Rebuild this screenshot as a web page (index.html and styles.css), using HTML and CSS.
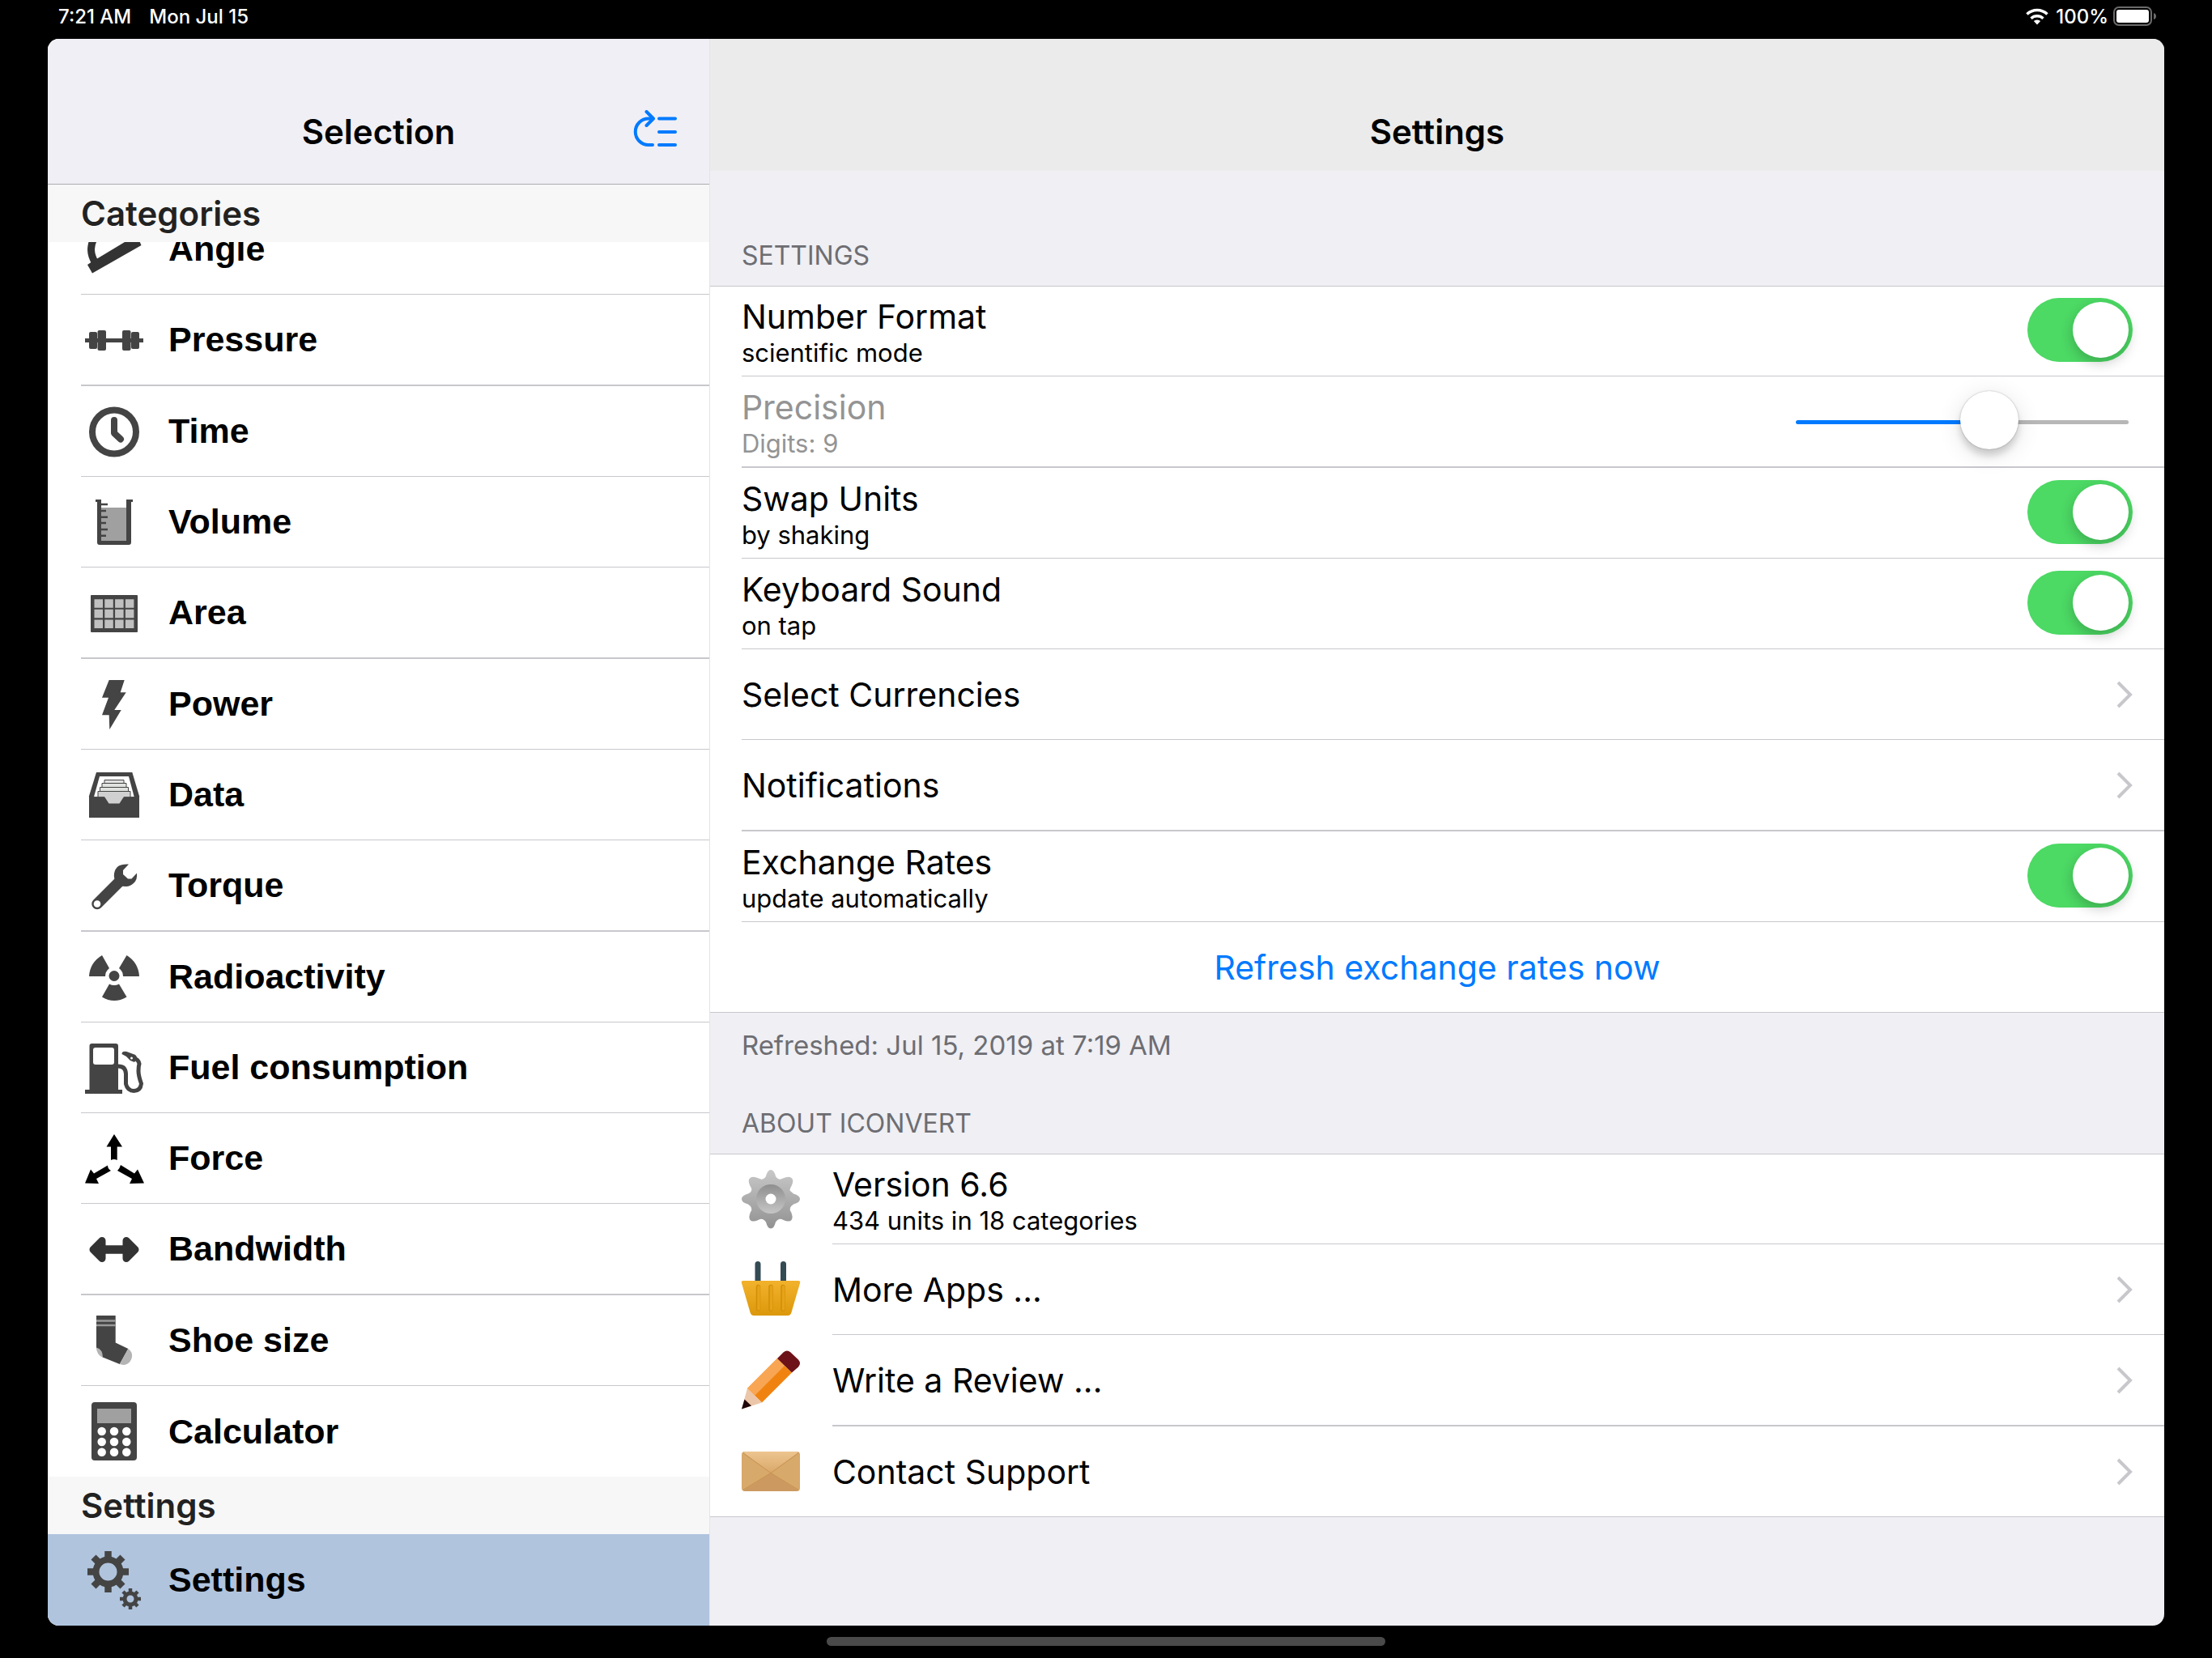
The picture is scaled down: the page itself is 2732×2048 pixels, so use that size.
FILE: index.html
```html
<!DOCTYPE html>
<html lang="en">
  <head>
    <meta charset="UTF-8" />
    <meta name="viewport" content="width=device-width, initial-scale=1.0" />
    <title>iConvert - Settings</title>
    <link rel="stylesheet" href="styles.css">
  </head>
  <body>
    <div class="statusbar">
      <span>7:21 AM</span>
      <span>Mon Jul 15</span>
      <span class="status-right">
        <svg class="wifi" viewBox="0 0 28 21">
          <path d="M1.5 7.5a18 18 0 0 1 25 0" fill="none" stroke="#fff" stroke-width="3.6" />
          <path d="M6.5 12.7a11 11 0 0 1 15 0" fill="none" stroke="#fff" stroke-width="3.4" />
          <path d="M14 20.5l-4.2-4.4a6 6 0 0 1 8.4 0z" fill="#fff" />
        </svg>
        <span>100%</span>
        <svg class="battery" viewBox="0 0 53 24">
          <rect x="1" y="1" width="46" height="22" rx="6" fill="none" stroke="#6b6b6b" stroke-width="2" />
          <rect x="4" y="4" width="40" height="16" rx="3" fill="#fff" />
          <path d="M50 8q3 1 3 4t-3 4z" fill="#6b6b6b" />
        </svg>
      </span>
    </div>
    <div class="app">
      <nav class="sidebar">
        <header class="side-head">
          <h1>Selection</h1>
          <button class="reorder" aria-label="Reorder">
            <svg viewBox="0 0 54 46">
              <g fill="none" stroke="#007aff" stroke-width="4" stroke-linecap="round" stroke-linejoin="round">
                <path d="M24 10.500h-5a16.200 16.200 0 0 0 0 32.500h5" />
                <path d="M16.500 2l8.500 8.500-8.500 8.500" />
                <path d="M32 10.500h20M32 27h20M32 43h20" />
              </g>
            </svg>
          </button>
        </header>
        <h2 class="side-title">Categories</h2>
        <ul class="cats">
          <li>
            <a href="#angle">
              <svg class="icon" viewBox="0 0 72 72" fill="#333">
                <path d="M3 55l4.500-3L49 27l15-9 5.500 13L9 65.500z" />
                <path d="M13 53q-7-11-5-21 1-9 10-18" fill="none" stroke="#333" stroke-width="9" />
              </svg>
              Angle
            </a>
          </li>
          <li>
            <a href="#pressure">
              <svg class="icon" viewBox="0 0 72 72" fill="#444">
                <rect y="34" width="72" height="5" />
                <rect x="5" y="26" width="10" height="21" rx="2" />
                <rect x="15.500" y="24" width="10.500" height="25" rx="2" />
                <rect x="46" y="24" width="10.500" height="25" rx="2" />
                <rect x="57" y="26" width="10" height="21" rx="2" />
              </svg>
              Pressure
            </a>
          </li>
          <li>
            <a href="#time">
              <svg class="icon" viewBox="0 0 72 72" fill="none" stroke="#444">
                <circle cx="36" cy="36.500" r="27" stroke-width="8" />
                <path d="M36 22v16l8 7.500" stroke-width="8" stroke-linecap="round" stroke-linejoin="round" />
              </svg>
              Time
            </a>
          </li>
          <li>
            <a href="#volume">
              <svg class="icon" viewBox="0 0 72 72" fill="#444">
                <rect x="19" y="18" width="33" height="42" fill="#a0a0a0" />
                <path d="M13 8h7v51h31V8h8v3h-2v50q0 3-3 3H18q-3 0-3-3V11h-2z" />
                <path d="M20 14h8M20 22h6M20 29.700h8M20 37h6M20 45h8M20 52.700h6" stroke="#444" stroke-width="2.500" />
              </svg>
              Volume
            </a>
          </li>
          <li>
            <a href="#area">
              <svg class="icon" viewBox="0 0 72 72">
                <rect x="7" y="14" width="58" height="46" rx="1" fill="#444" />
                <path d="M11.500 24.500h49M11.500 37h49M11.500 49.700h49" stroke="#c0c0c0" stroke-width="10.500" stroke-dasharray="10.500 2.300" />
              </svg>
              Area
            </a>
          </li>
          <li>
            <a href="#power">
              <svg class="icon" viewBox="0 0 72 72" fill="#444">
                <path d="M29.700 6h19l-5 15.300h7L36.300 43h8.400L30.300 67l-.6-17.700H21l8-21.600h-8z" />
              </svg>
              Power
            </a>
          </li>
          <li>
            <a href="#data">
              <svg class="icon" viewBox="0 0 72 72">
                <path d="M14 8h44.300L67 37.300V64H5V37.300z" fill="#444" />
                <path d="M18 13h36l6.700 25.300H11z" fill="#fff" />
                <g fill="#dfe2df" stroke="#444" stroke-width="1">
                  <path d="M24 21v-3.500h24V21M21 26v-4.500h30V26M18.500 31v-4.500h35V31" />
                  <path d="M16 39v-7.500h40V39z" fill="#d0d0d0" />
                </g>
                <path d="M11 38.300h13l5.500 8h13l5.500-8h13V48H11z" fill="#444" />
                <path d="M24 38h24l-5.500 8.500h-13z" fill="#d0d0d0" />
              </svg>
              Data
            </a>
          </li>
          <li>
            <a href="#torque">
              <svg class="icon" viewBox="0 0 72 72">
                <path d="M15 58.500l27-27" stroke="#444" stroke-width="13.500" stroke-linecap="round" />
                <circle cx="15" cy="58.500" r="4.300" fill="#fff" />
                <path d="M54 9.500L47 17v5l6 5.500h4.500l6.500-7q1 8-4 12.500T50 37q-7 0-11-5t-3-11q1-6 5-9t13-2.500z" fill="#444" />
              </svg>
              Torque
            </a>
          </li>
          <li>
            <a href="#radioactivity">
              <svg class="icon" viewBox="0 0 72 72" fill="#444">
                <circle cx="36" cy="34.500" r="6.500" />
                <path d="M5 35q1-17 16-26l9 16q-5 4-5 10zM67 35q-1-17-15.500-26l-9.500 16q5 4 5 10zM30 44.500q6 3 12 0l9.500 16q-15.500 9-30.500 0z" />
              </svg>
              Radioactivity
            </a>
          </li>
          <li>
            <a href="#fuel">
              <svg class="icon" viewBox="0 0 72 72" fill="#444">
                <path d="M5.500 9q0-3 3-3H38q3 0 3 3v54h5v5H0v-5h5.500z" />
                <rect x="10" y="11" width="26" height="21" rx="3" fill="#fff" />
                <path d="M41 34q9 0 9.500 9v13q2 8.500 10 8.500t9-9Q66 46 66 40t1-9q-1-6-8-7" fill="none" stroke="#444" stroke-width="5" />
                <path d="M45.500 19q0-4 6-3l8 3q5 1 4.500 6l-3 4-5-2-5-5z" />
                <circle cx="57.500" cy="24" r="1.500" fill="#fff" />
              </svg>
              Fuel consumption
            </a>
          </li>
          <li>
            <a href="#force">
              <svg class="icon" viewBox="0 0 72 72">
                <path d="M36 6l10 15.500h-6.300V38q-4-2-7.700 0V21.500h-5.500z" />
                <path d="M0 66.500l7-17 4 5L28 44.500q0 4 4 6.500L14 61l3 6z" />
                <path d="M73 66.500l-8-17-4 5-17-10.500q-1 4-4 7l18 10-3 6z" />
              </svg>
              Force
            </a>
          </li>
          <li>
            <a href="#bandwidth">
              <svg class="icon" viewBox="0 0 72 72" fill="#333" stroke="#333" stroke-width="9" stroke-linejoin="round">
                <path d="M10 36.500l11-11v22zM62 36.500l-11-11v22z" />
                <path d="M20 36.500h32" stroke-width="10.500" />
              </svg>
              Bandwidth
            </a>
          </li>
          <li>
            <a href="#shoe">
              <svg class="icon" viewBox="0 0 72 72">
                <path d="M14 5h23.700v33.500l15.600 7.500-10.500 19-21-8.500L14 45z" fill="#444" />
                <path d="M14 11.500h23.700M14 17h23.700" stroke="#999" stroke-width="2.500" />
                <path d="M53.300 46q6 4 4.500 11t-9 9q-3 0-6-1z" fill="#b4b4b4" />
                <path d="M14 44.500q8 2 8 12.500-8-4-8-12.500z" fill="#b4b4b4" />
              </svg>
              Shoe size
            </a>
          </li>
          <li>
            <a href="#calculator">
              <svg class="icon" viewBox="0 0 72 72">
                <rect x="8" width="56" height="72" rx="4" fill="#444" />
                <rect x="15" y="8" width="42" height="18" fill="#a0a0a0" />
                <g stroke="#fff" stroke-width="10.500" stroke-linecap="round">
                  <path d="M20.700 36h0M36 36h0M51.300 36h0M20.700 49h0M36 49h0M51.300 49h0M20.700 61.700h0M36 61.700h0M51.300 61.700h0" />
                </g>
              </svg>
              Calculator
            </a>
          </li>
        </ul>
        <h2 class="side-title">Settings</h2>
        <ul>
          <li class="selected">
            <a href="#settings">
              <svg class="icon" viewBox="0 0 72 72" fill="none" stroke="#444">
                <circle cx="28.500" cy="25.500" r="15" stroke-width="8" />
                <path d="M28.500 0v9M28.500 42v9M3 25.500h9M45 25.500h9M10.500 7.500l6 6M40.500 37.500l6 6M10.500 43.500l6-6M40.500 13.500l6-6" stroke-width="8.500" />
                <circle cx="56" cy="59" r="7" stroke-width="5" />
                <path d="M56 46v5M56 67v5M43 59h5M64 59h5M47 50l3 3M62 65l3 3M47 68l3-3M62 53l3-3" stroke-width="4.500" />
              </svg>
              Settings
            </a>
          </li>
        </ul>
      </nav>
      <main class="detail">
        <header class="detail-head">
          <h1>Settings</h1>
        </header>
        <h2 class="group-title">SETTINGS</h2>
        <ul class="group">
          <li>
            <label class="text two" for="format">Number Format<small>scientific mode</small></label>
            <input type="checkbox" class="switch" id="format" checked />
          </li>
          <li>
            <label class="text two off" for="digits">Precision<small>Digits: 9</small></label>
            <input type="range" class="slider" id="digits" min="0" max="15" value="9" />
          </li>
          <li>
            <label class="text two" for="swap">Swap Units<small>by shaking</small></label>
            <input type="checkbox" class="switch" id="swap" checked />
          </li>
          <li>
            <label class="text two" for="sound">Keyboard Sound<small>on tap</small></label>
            <input type="checkbox" class="switch" id="sound" checked />
          </li>
          <li>
            <a class="text" href="#currencies">Select Currencies</a>
            <svg class="chevron" viewBox="0 0 20 34"><path d="M2 2l15 15L2 32" /></svg>
          </li>
          <li>
            <a class="text" href="#notifications">Notifications</a>
            <svg class="chevron" viewBox="0 0 20 34"><path d="M2 2l15 15L2 32" /></svg>
          </li>
          <li>
            <label class="text two" for="rates">Exchange Rates<small>update automatically</small></label>
            <input type="checkbox" class="switch" id="rates" checked />
          </li>
          <li>
            <button class="refresh">Refresh exchange rates now</button>
          </li>
        </ul>
        <p class="note">Refreshed: Jul 15, 2019 at 7:19 AM</p>
        <h2 class="group-title about-title">ABOUT ICONVERT</h2>
        <ul class="group about">
          <li>
            <svg class="icon" viewBox="0 0 72 72">
              <defs>
                <linearGradient id="steel" gradientUnits="userSpaceOnUse" x1="0" y1="0" x2="0" y2="72">
                  <stop offset="0" stop-color="#c8c8c8" />
                  <stop offset="1" stop-color="#929292" />
                </linearGradient>
                <linearGradient id="hub" x1="0" y1="0" x2="0" y2="1">
                  <stop offset="0" stop-color="#8e8e8e" />
                  <stop offset="1" stop-color="#c6c6c6" />
                </linearGradient>
              </defs>
              <path d="M36 0q4 0 6 8 1.500 3 4 3.500t5-1q7-3 10.500-.5t0 10q-3 5-1.500 6t4 3.500q8 2 8 6.500t-8 6.500q-3 2-4 4.500t1 5q3 7 .5 10t-10 0q-3-2-5.500-1t-4 3.500q-2 8-6 8t-6-8q-1.500-2.500-4-3.500t-5.500 1q-7.500 3-10 0t.5-10q2-2.500 1-5T8 42.500Q0 40.500 0 36t8-6.500q3-1 4-3.500t-1.500-6q-3.500-7.500 0-10t10.500.5q2.500 1.500 5 1t4-3.500q2-8 6-8z" fill="url(#steel)" />
              <circle cx="36" cy="36" r="18" fill="url(#hub)" />
              <circle cx="36" cy="36" r="6.500" fill="#fff" />
            </svg>
            <div class="text two">Version 6.6<small>434 units in 18 categories</small></div>
          </li>
          <li>
            <svg class="icon" viewBox="0 0 72 72">
              <defs>
                <linearGradient id="basket" x1="0" y1="0" x2="0" y2="1">
                  <stop offset="0" stop-color="#f2b22c" />
                  <stop offset="1" stop-color="#dc980b" />
                </linearGradient>
              </defs>
              <path d="M20 4.500V28M51.500 4.500V28" stroke="#344b54" stroke-width="7" stroke-linecap="round" />
              <path d="M2 25h68q3 0 2 3L61.500 64q-1 4-4.500 4H15q-3.500 0-4.500-4L0 28q-1-3 2-3z" fill="url(#basket)" />
              <path d="M20.500 32.500V60M36 32.500V60M51 32.500V60" stroke="#d08e0a" stroke-width="5.500" stroke-linecap="round" />
              <path d="M21 32.500V60M36.500 32.500V60M51.500 32.500V60" stroke="#e6a318" stroke-width="3.500" stroke-linecap="round" />
            </svg>
            <a class="text" href="#apps">More Apps ...</a>
            <svg class="chevron" viewBox="0 0 20 34"><path d="M2 2l15 15L2 32" /></svg>
          </li>
          <li>
            <svg class="icon" viewBox="0 0 72 72">
              <path d="M44 9l18 17.500-37 37L7 46z" fill="#f08310" />
              <path d="M44 9l9 9-37 37-9-9z" fill="#f8a653" />
              <path d="M44 9l7.500-7.500q4.500-4 9 0l9.500 9q4 4.500 0 9L62 26.500z" fill="#6d1218" />
              <path d="M7 46l18 17.500L0 71.500z" fill="#ebc6a8" />
              <path d="M3.500 59.500l8.500 8-12 4z" fill="#1f0608" />
            </svg>
            <a class="text" href="#review">Write a Review ...</a>
            <svg class="chevron" viewBox="0 0 20 34"><path d="M2 2l15 15L2 32" /></svg>
          </li>
          <li>
            <svg class="icon" viewBox="0 0 72 72">
              <defs>
                <linearGradient id="flap" x1="0" y1="0" x2="0" y2="1">
                  <stop offset="0" stop-color="#edc590" />
                  <stop offset="1" stop-color="#d9a86a" />
                </linearGradient>
              </defs>
              <rect y="11" width="72" height="49" rx="4" fill="#d7a96b" />
              <path d="M2 12q1-1 3-1h62q2 0 3 1L36 37.500z" fill="url(#flap)" />
              <path d="M2 59q1 1 3 1h62q2 0 3-1L36 37.500z" fill="#cc9961" />
              <path d="M1.500 12.500L36 37.500l34.500-25M1.500 58.500L36 37.500l34.500 21" fill="none" stroke="#c8924f" stroke-width="1" />
            </svg>
            <a class="text" href="#support">Contact Support</a>
            <svg class="chevron" viewBox="0 0 20 34"><path d="M2 2l15 15L2 32" /></svg>
          </li>
        </ul>
      </main>
    </div>
    <div class="home"></div>
  </body>
</html>
```

FILE: styles.css
```css
* {
  box-sizing: border-box;
}
body {
  display: flex;
  flex-direction: column;
  min-height: 100vh;
  margin: 0;
  color: #000;
  background-color: #000;
  font-family: Inter, "Liberation Sans", sans-serif;
  font-size: 41px;
}
h1,
h2,
p,
ul {
  margin: 0;
  padding: 0;
}
ul {
  list-style: none;
}
a {
  color: inherit;
  text-decoration: none;
}
button {
  padding: 0;
  border: 0;
  background: none;
  font: inherit;
  cursor: pointer;
}

/* status bar */
.statusbar {
  display: flex;
  align-items: center;
  gap: 22px;
  height: 48px;
  padding: 0 69px 8px 72px;
  color: #fff;
  font-size: 24px;
  font-weight: 500;
}
.status-right {
  display: flex;
  align-items: center;
  gap: 6px;
  margin-left: auto;
}
.wifi {
  width: 28px;
  height: 21px;
  margin-right: 3px;
}
.battery {
  width: 53px;
  height: 24px;
}

.app {
  display: flex;
  flex: 1;
  margin: 0 59px;
  border-radius: 14px;
  overflow: hidden;
  background-color: #efeff4;
}

/* sidebar */
.sidebar {
  width: 31.25%;
  background-color: #fff;
}
.side-head {
  display: grid;
  grid-template-columns: 1fr auto 1fr;
  align-items: center;
  height: 180px;
  padding: 50px 40px 0;
  background-color: #f0eff5;
  border-bottom: 1px solid #acacb0;
}
h1 {
  font-size: 42px;
  font-weight: 600;
}
.side-head h1 {
  grid-column: 2;
}
.reorder {
  justify-self: end;
  padding-bottom: 8px;
}
.reorder svg {
  display: block;
  width: 54px;
  height: 46px;
}
.side-title {
  height: 71px;
  padding-left: 41px;
  color: #222;
  background-color: #f7f7f7;
  font-size: 42px;
  font-weight: 600;
  line-height: 71px;
}
/* the list is scrolled a little, so its first row is cut off */
.cats {
  overflow: hidden;
}
.cats li:first-child {
  margin-top: -47px;
}
.sidebar li {
  height: 112px;
  padding-left: 41px;
}
.sidebar a {
  display: flex;
  align-items: center;
  gap: 31px;
  height: 100%;
  padding-left: 5px;
  border-bottom: 1px solid #c8c7cc;
  font-family: "Liberation Sans", Arial, sans-serif;
  font-size: 43px;
  font-weight: bold;
}
.sidebar li:nth-child(2),
.sidebar li:nth-child(5),
.sidebar li:nth-child(8),
.sidebar li:nth-child(12) {
  height: 113px;
}
.sidebar li:nth-child(2) a,
.sidebar li:nth-child(5) a,
.sidebar li:nth-child(8) a,
.sidebar li:nth-child(12) a {
  border-bottom-width: 2px;
}
.sidebar li:last-child a {
  border-bottom: 0;
}
.sidebar .selected {
  height: 113px;
  background-color: #b0c4de;
}
.icon {
  flex: none;
  width: 72px;
  height: 72px;
  overflow: visible;
}

/* detail */
.detail {
  flex: 1;
  border-left: 1px solid #e4e4e8;
}
.detail-head {
  display: flex;
  align-items: center;
  justify-content: center;
  height: 163px;
  padding-top: 66px;
  background-color: #ebebeb;
}
.group-title,
.note {
  padding: 0 39px;
  color: #6d6d72;
  font-size: 32px;
  font-weight: normal;
  line-height: 40px;
}
.group-title {
  padding-top: 85px;
  padding-bottom: 17px;
}
.note {
  padding-top: 20px;
  font-size: 33px;
}
.about-title {
  padding-top: 57px;
}
.group {
  background-color: #fff;
  box-shadow: inset 0 1px #c8c7cc, inset 0 -1px #c8c7cc;
}
.group li {
  display: flex;
  align-items: center;
  height: 112px;
  margin-left: 39px;
  padding-right: 39px;
  border-bottom: 1px solid #c8c7cc;
}
.group li:nth-child(2),
.group li:nth-child(6),
.about li:nth-child(3) {
  height: 113px;
  border-bottom-width: 2px;
}
.about li:nth-child(2) {
  height: 112px;
  border-bottom-width: 1px;
}
/* about rows: the line starts at the text, past the icon */
.about li {
  margin-left: 151px;
}
.about .icon {
  margin-left: -112px;
  margin-right: 40px;
}
.text {
  flex: 1;
  line-height: 50px;
}
.two {
  padding-top: 5px;
}
.text small {
  display: block;
  font-size: 31px;
  line-height: 40px;
}
.off {
  color: #949494;
}
.switch {
  display: flex;
  justify-content: flex-end;
  appearance: none;
  width: 130px;
  height: 79px;
  margin: 0 0 2px;
  padding: 5px;
  border-radius: 40px;
  background-color: #4cd964;
  cursor: pointer;
}
.switch::before {
  content: "";
  width: 69px;
  border-radius: 50%;
  background-color: #fff;
  box-shadow: 0 6px 16px rgba(0, 0, 0, 0.22);
}
.switch:not(:checked) {
  justify-content: flex-start;
  background-color: #e5e5ea;
}
.slider {
  appearance: none;
  width: 411px;
  height: 73px;
  margin: 2px 5px 0 0;
  background: none;
}
.slider::-webkit-slider-runnable-track {
  height: 5px;
  border-radius: 3px;
  background: linear-gradient(to right, #007aff 60%, #b7b7b7 60%);
}
.slider::-webkit-slider-thumb {
  appearance: none;
  width: 72px;
  height: 72px;
  margin-top: -36px;
  border-radius: 50%;
  background-color: #fff;
  box-shadow: 0 0 2px rgba(0, 0, 0, 0.3), 0 8px 8px rgba(0, 0, 0, 0.15),
    0 6px 30px rgba(0, 0, 0, 0.12);
}
.chevron {
  width: 20px;
  height: 34px;
  fill: none;
  stroke: #c7c7cc;
  stroke-width: 4;
}
.refresh {
  flex: 1;
  color: #007aff;
}

.home {
  align-self: center;
  width: 690px;
  height: 11px;
  margin: 14px 0 15px;
  border-radius: 6px;
  background-color: #4a4a4a;
}
```
